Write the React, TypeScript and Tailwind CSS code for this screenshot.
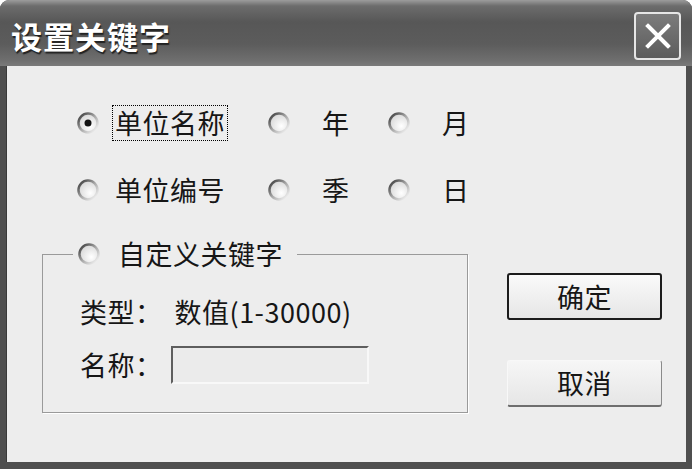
import React from "react";

const font = "font-['Noto_Sans_CJK_SC','Noto_Sans_CJK_JP',sans-serif]";

function Radio({ checked }: { checked?: boolean }) {
  return (
    <svg width="22" height="22" viewBox="0 0 22 22" className="shrink-0">
      <defs>
        <linearGradient id="radioStroke" x1="0" y1="0" x2="1" y2="1">
          <stop offset="0" stopColor="#333333" />
          <stop offset="0.5" stopColor="#a8a8a8" />
          <stop offset="1" stopColor="#ffffff" />
        </linearGradient>
        <radialGradient id="radioFill" cx="0.62" cy="0.66" r="0.6">
          <stop offset="0" stopColor="#ffffff" />
          <stop offset="1" stopColor="#dcdcdc" />
        </radialGradient>
      </defs>
      <circle cx="11" cy="11" r="9.5" fill="url(#radioFill)" stroke="url(#radioStroke)" strokeWidth="2.5" />
      {checked && <circle cx="11" cy="11" r="3.5" fill="#111" />}
    </svg>
  );
}

function CloseButton() {
  return (
    <div className="flex h-[48px] w-[47px] items-center justify-center rounded-[4px] border-2 border-[#e6e6e6] bg-[linear-gradient(to_bottom,#7c7c7c,#5c5c5c)]">
      <svg width="30" height="30" viewBox="0 0 30 30">
        <path d="M5 5 L25 25 M25 5 L5 25" stroke="#fff" strokeWidth="4" strokeLinecap="square" />
      </svg>
    </div>
  );
}

export default function App() {
  return (
    <div className={`h-[469px] w-[692px] bg-white ${font} text-[#161616]`}>
      <div className="flex h-full w-full flex-col rounded-t-[9px] bg-[#4f4f4f]">
        {/* title bar */}
        <div className="flex h-[66px] shrink-0 items-center justify-between rounded-t-[9px] bg-[linear-gradient(to_bottom,#9c9c9c_0px,#6c6c6c_6px,#575757_22px,#5c5c5c_44px,#6e6e6e_60px,#7a7a7a_66px)] pl-[11px] pr-[11px]">
          <span className="mt-[6px] text-[31px] leading-[36px] font-bold tracking-[1px] text-white [text-shadow:1px_2px_1px_#222]">
            设置关键字
          </span>
          <div className="mt-[6px]">
            <CloseButton />
          </div>
        </div>

        {/* body */}
        <div className="mx-[6px] mb-[7px] flex-1 border-l border-[#3a3a3a] bg-[#ededed] pl-[35px] pt-[39px] text-[27px] leading-[30px] tracking-[0.5px]">
          <div className="ml-[35px] flex flex-col gap-[31px]">
            <div className="flex h-[36px] items-center">
              <div className="flex w-[191px] items-center">
                <Radio checked />
                <span className="ml-[16px] outline-1 outline-offset-2 outline-dotted outline-black">单位名称</span>
              </div>
              <div className="flex w-[120px] items-center">
                <Radio />
                <span className="ml-[32px]">年</span>
              </div>
              <div className="flex items-center">
                <Radio />
                <span className="ml-[32px]">月</span>
              </div>
            </div>
            <div className="flex h-[36px] items-center">
              <div className="flex w-[191px] items-center">
                <Radio />
                <span className="ml-[16px]">单位编号</span>
              </div>
              <div className="flex w-[120px] items-center">
                <Radio />
                <span className="ml-[32px]">季</span>
              </div>
              <div className="flex items-center">
                <Radio />
                <span className="ml-[32px]">日</span>
              </div>
            </div>
          </div>

          <div className="mt-[31px] flex items-start">
            <fieldset className="h-[174px] w-[426px] border border-[#9a9a9a] p-0 shadow-[1px_1px_0_#fff]">
              <legend className="ml-[30px] flex items-center pl-[5px] pr-[14px]">
                <Radio />
                <span className="ml-[18px]">自定义关键字</span>
              </legend>
              <div className="flex flex-col pl-[37px]">
                <div className="mt-[28px] flex h-[30px] items-center">
                  <span>类型：</span>
                  <span className="ml-[12px]">数值(1-30000)</span>
                </div>
                <div className="mt-[19px] flex items-center">
                  <span>名称：</span>
                  <div className="ml-[8px] h-[38px] w-[198px] border-2 border-t-[#5e5e5e] border-l-[#5e5e5e] border-r-[#f8f8f8] border-b-[#f8f8f8] bg-[#ebebeb]" />
                </div>
              </div>
            </fieldset>

            <div className="ml-[39px] mt-[34px] flex flex-col gap-[40px]">
              <button className="flex h-[47px] w-[155px] items-center justify-center rounded-[3px] border-2 border-[#1c1c1c] bg-[linear-gradient(to_bottom,#fafafa,#e6e6e6)] leading-[30px]">
                确定
              </button>
              <button className="flex h-[47px] w-[155px] items-center justify-center rounded-[3px] border border-b-2 border-t-[#f8f8f8] border-l-[#f8f8f8] border-r-[#8a8a8a] border-b-[#6e6e6e] bg-[linear-gradient(to_bottom,#f6f6f6,#e6e6e6)] leading-[30px]">
                取消
              </button>
            </div>
          </div>
        </div>
      </div>
    </div>
  );
}
